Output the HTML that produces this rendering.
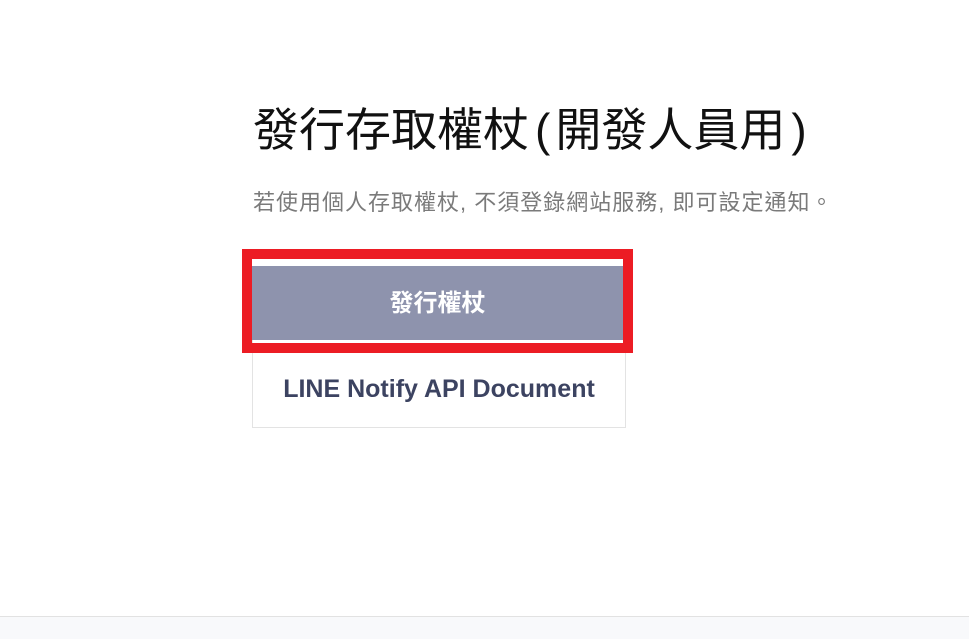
<!DOCTYPE html>
<html><head><meta charset="utf-8"><style>
body{margin:0;width:969px;height:638px;background:#fff;position:relative;overflow:hidden;font-family:"Liberation Sans","Noto Sans CJK TC",sans-serif}
.t{position:absolute;left:253px;top:104px;font-size:46px;color:#111;white-space:nowrap;line-height:52px}
.t span{margin:0 5px 0 6px}
.s{position:absolute;left:253px;top:189px;font-size:22px;letter-spacing:1px;color:#7a7a7a;white-space:nowrap;line-height:28px}
.red{position:absolute;left:242px;top:249px;width:371px;height:84px;border:10px solid #ec1c24}
.btn{position:absolute;left:252px;top:266px;width:371px;height:74px;background:#8e93ad;color:#fff;font-weight:bold;font-size:24px;text-align:center;line-height:76px}
.doc{position:absolute;left:252px;top:340px;width:372px;height:87px;border:1px solid #e3e3e3;border-top:none;color:#3c4361;font-weight:bold;font-size:25px;text-align:center;line-height:98px}
.f{position:absolute;left:0;top:616px;width:969px;height:22px;background:#f8f9fb;border-top:1px solid #e2e2e2}
</style></head><body>
<div class="t">發行存取權杖<span>(</span>開發人員用<span>)</span></div>
<div class="s">若使用個人存取權杖, 不須登錄網站服務, 即可設定通知。</div>
<div class="doc">LINE Notify API Document</div>
<div class="red"></div>
<div class="btn">發行權杖</div>
<div class="f"></div>
</body></html>
